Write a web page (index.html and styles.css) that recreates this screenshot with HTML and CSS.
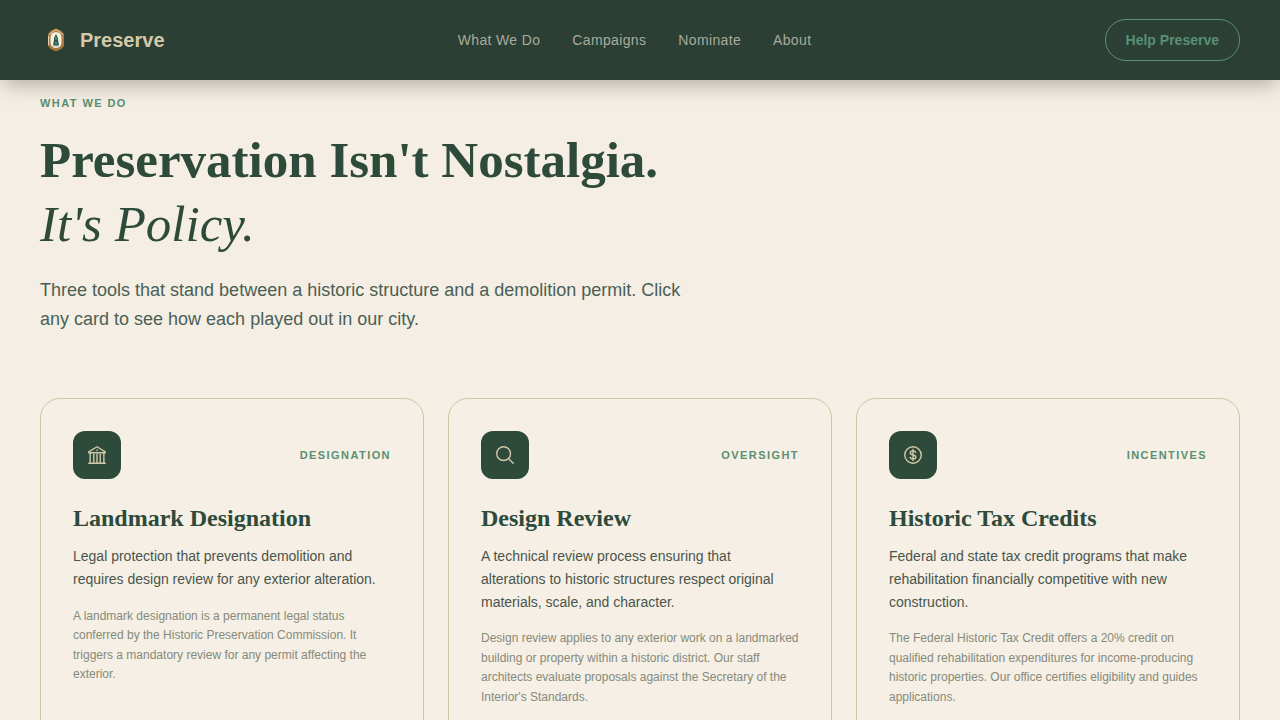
FILE: index.html
```html
<!DOCTYPE html>
<html lang="en">
<head>
    <meta charset="UTF-8">
    <meta name="viewport" content="width=device-width, initial-scale=1.0">
    <title>Preserve</title>
    <link rel="stylesheet" href="styles.css">
</head>
<body>
    <header class="site-header">
        <a class="brand" href="#">
            <svg class="brand-logo" viewBox="0 0 32 32" aria-hidden="true">
                <path d="M16 4.500 21 6.500 24 10v12l-3 3-5 2.500-5-2.500-3-3V10l3-3.500z" fill="#a9793f"/>
                <path d="M9 10.500 16 5.500l7 5M8.500 12v9" fill="none" stroke="#e3d3b0" stroke-width="1"/>
                <rect x="10.500" y="8" width="11" height="16" rx="5.500" fill="#f4efe2"/>
                <path d="M16 10 18 14v2l1 5.500h-6l1-5.500v-2z" fill="#2a5c49"/>
                <path d="M13.500 22h5M16 13v3M16 18v2" stroke="#7fae96" stroke-width="1"/>
            </svg>
            <span>Preserve</span>
        </a>
        <nav class="main-nav">
            <a href="#what">What We Do</a>
            <a href="#campaigns">Campaigns</a>
            <a href="#nominate">Nominate</a>
            <a href="#about">About</a>
        </nav>
        <a class="help-button" href="#help">Help Preserve</a>
    </header>

    <main class="section" id="what">
        <p class="eyebrow">What We Do</p>
        <h1>Preservation Isn't Nostalgia.<br><em>It's Policy.</em></h1>
        <p class="intro">Three tools that stand between a historic structure and a demolition permit. Click any card to see how each played out in our city.</p>

        <div class="cards">
            <article class="card">
                <div class="card-top">
                    <div class="card-icon">
                        <svg viewBox="0 0 24 24" aria-hidden="true">
                            <path d="M3 8.500 12 3l9 5.500v1H3z"/>
                            <path d="M4.500 10v10M8.500 11v9M12 11v9M15.500 11v9M19.500 10v10M3 21h18M12 6.500v.6"/>
                        </svg>
                    </div>
                    <span class="tag">Designation</span>
                </div>
                <h2>Landmark Designation</h2>
                <p class="summary">Legal protection that prevents demolition and requires design review for any exterior alteration.</p>
                <p class="detail">A landmark designation is a permanent legal status conferred by the Historic Preservation Commission. It triggers a mandatory review for any permit affecting the exterior.</p>
            </article>

            <article class="card">
                <div class="card-top">
                    <div class="card-icon">
                        <svg viewBox="0 0 24 24" aria-hidden="true">
                            <circle cx="10.500" cy="10.500" r="7.500"/>
                            <path d="M16 16l5 5"/>
                        </svg>
                    </div>
                    <span class="tag">Oversight</span>
                </div>
                <h2>Design Review</h2>
                <p class="summary">A technical review process ensuring that alterations to historic structures respect original materials, scale, and character.</p>
                <p class="detail">Design review applies to any exterior work on a landmarked building or property within a historic district. Our staff architects evaluate proposals against the Secretary of the Interior's Standards.</p>
            </article>

            <article class="card">
                <div class="card-top">
                    <div class="card-icon">
                        <svg viewBox="0 0 24 24" aria-hidden="true">
                            <circle cx="12" cy="12" r="9"/>
                            <path d="M12 6v12M15 9.200c-.5-1-1.600-1.500-3-1.500-1.700 0-3 .8-3 2.100 0 3 6 1.400 6 4.300 0 1.400-1.300 2.200-3 2.200-1.500 0-2.700-.6-3.200-1.700"/>
                        </svg>
                    </div>
                    <span class="tag">Incentives</span>
                </div>
                <h2>Historic Tax Credits</h2>
                <p class="summary">Federal and state tax credit programs that make rehabilitation financially competitive with new construction.</p>
                <p class="detail">The Federal Historic Tax Credit offers a 20% credit on qualified rehabilitation expenditures for income-producing historic properties. Our office certifies eligibility and guides applications.</p>
            </article>
        </div>
    </main>
</body>
</html>
```
FILE: styles.css
```css
* {
    box-sizing: border-box;
}
body {
    margin: 0;
    background-color: #f5eee4;
    color: #2d4a3b;
    font-family: "Liberation Sans", Arial, sans-serif;
}
h1, h2, p {
    margin: 0;
}
a {
    text-decoration: none;
}

/* header */
.site-header {
    position: sticky;
    top: 0;
    display: flex;
    align-items: center;
    justify-content: space-between;
    height: 80px;
    padding: 0 40px;
    background-color: #2b3f34;
    box-shadow: 0 8px 20px -4px rgba(0, 0, 0, 0.3);
}
.brand {
    display: flex;
    align-items: center;
    gap: 8px;
    color: #d4c9a8;
    font-size: 20px;
    font-weight: bold;
}
.brand-logo {
    width: 32px;
    height: 32px;
}
.main-nav {
    display: flex;
    gap: 32px;
}
.main-nav a {
    color: #a9ab9c;
    font-size: 14px;
    letter-spacing: 0.025em;
}
.help-button {
    padding: 12px 20px;
    border: 1px solid #5a8f78;
    border-radius: 24px;
    color: #5a8f78;
    font-size: 14px;
    font-weight: bold;
    line-height: 16px;
}

/* what we do */
.section {
    padding: 16px 40px 80px;
}
.eyebrow,
.tag {
    color: #5a8f6f;
    font-size: 11px;
    font-weight: bold;
    line-height: 14px;
    letter-spacing: 0.13em;
    text-transform: uppercase;
}
h1 {
    margin-top: 18px;
    font-family: "Liberation Serif", "Times New Roman", serif;
    font-size: 51px;
    line-height: 64px;
}
h1 em {
    font-weight: normal;
}
.intro {
    max-width: 660px;
    margin-top: 20px;
    color: #4a6055;
    font-size: 18px;
    line-height: 29px;
}

/* cards */
.cards {
    display: grid;
    grid-template-columns: repeat(3, 1fr);
    gap: 24px;
    margin-top: 64px;
}
.card {
    padding: 32px;
    border: 1px solid #c9c9a3;
    border-radius: 20px;
    background-color: #f5efe5;
}
.card-top {
    display: flex;
    align-items: center;
    justify-content: space-between;
    margin-bottom: 24px;
}
.card-icon {
    display: flex;
    align-items: center;
    justify-content: center;
    width: 48px;
    height: 48px;
    border-radius: 12px;
    background-color: #2d4a3b;
}
.card-icon svg {
    width: 22px;
    height: 22px;
    fill: none;
    stroke: #d4c9a8;
    stroke-width: 1.5;
    stroke-linecap: round;
    stroke-linejoin: round;
}
.card h2 {
    font-family: "Liberation Serif", "Times New Roman", serif;
    font-size: 24px;
    line-height: 30px;
}
.summary {
    margin-top: 12px;
    color: #4a554b;
    font-size: 14px;
    line-height: 1.625;
}
.detail {
    margin-top: 16px;
    color: #868a7a;
    font-size: 12px;
    line-height: 1.625;
}

@media (max-width: 900px) {
    .cards {
        grid-template-columns: 1fr;
    }
}
```
